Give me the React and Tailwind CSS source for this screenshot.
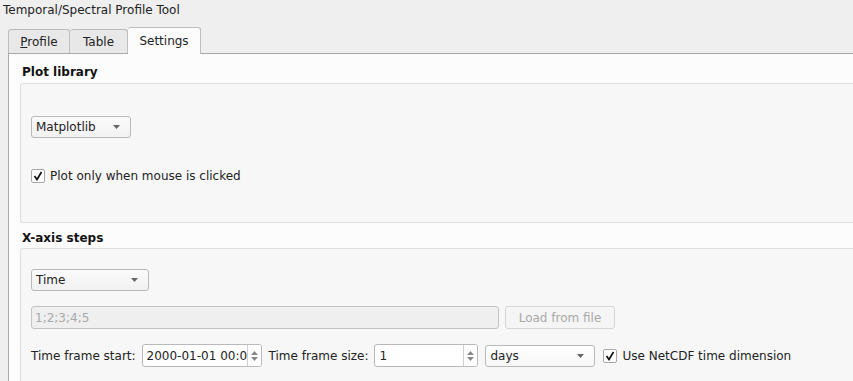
const font = { fontFamily: '"DejaVu Sans", sans-serif' }

function Arrow() {
  return (
    <svg width="7" height="4" viewBox="0 0 7 4" className="shrink-0">
      <path d="M0 0 L7 0 L3.5 4 Z" fill="#666" />
    </svg>
  )
}

function Combo({ label, className }) {
  return (
    <div className={`flex items-center justify-between h-[22px] pl-[4px] pr-[10px] rounded-[3px] border border-[#b9b9b9] bg-gradient-to-b from-[#fbfbfb] to-[#f1f1f1] text-[#222] ${className}`}>
      <span>{label}</span>
      <Arrow />
    </div>
  )
}

function Check({ label }) {
  return (
    <div className="flex items-center gap-[5px]">
      <div className="w-[14px] h-[14px] border border-[#a8a8a8] rounded-[2px] bg-white flex items-center justify-center">
        <svg width="10" height="10" viewBox="0 0 10 10">
          <path d="M1.5 5 L4 8.5 L8.5 1" fill="none" stroke="#111" strokeWidth="1.7" />
        </svg>
      </div>
      <span className="text-[#222]">{label}</span>
    </div>
  )
}

function Spin({ value, className }) {
  return (
    <div className={`flex items-center h-[23px] rounded-[3px] border border-[#b9b9b9] bg-white overflow-hidden ${className}`}>
      <span className="flex-1 pl-[4px] whitespace-nowrap overflow-hidden text-[#222]">{value}</span>
      <div className="w-[14px] h-full border-l border-[#cfcfcf] flex flex-col items-center justify-center gap-[2px] bg-white">
        <svg width="7" height="4" viewBox="0 0 7 4"><path d="M0 4 L3.5 0 L7 4 Z" fill="#888" /></svg>
        <svg width="7" height="4" viewBox="0 0 7 4"><path d="M0 0 L3.5 4 L7 0 Z" fill="#888" /></svg>
      </div>
    </div>
  )
}

export default function App() {
  return (
    <div className="w-[853px] h-[381px] overflow-hidden bg-[#efefef] text-[12px]" style={font}>
      {/* Title */}
      <div className="h-[20px] pl-[3px] pt-[1px] text-[#222]">Temporal/Spectral Profile Tool</div>

      {/* Tabs */}
      <div className="flex items-end h-[33px] pl-[8px]">
        <div className="h-[24px] w-[62px] border border-[#bdbdbd] border-b-0 rounded-t-[3px] bg-[#e8e8e8] flex items-center justify-center text-[#222]">
          <span><span className="underline">P</span>rofile</span>
        </div>
        <div className="h-[24px] w-[58px] border border-[#bdbdbd] border-l-0 border-b-0 rounded-t-[3px] bg-[#e8e8e8] flex items-center justify-center text-[#222]">
          Table
        </div>
        <div className="h-[27px] w-[73px] -mb-px relative z-10 border border-[#bdbdbd] border-l-0 border-b-0 rounded-t-[3px] bg-[#fcfcfc] flex items-center justify-center text-[#222]">
          Settings
        </div>
      </div>

      {/* Pane */}
      <div className="ml-[8px] h-[340px] border-t border-l border-[#a8a8a8] bg-[#fcfcfc] pl-[11px] pt-[9px]">
        <div className="font-bold text-[#111] pl-[2px] h-[20px]">Plot library</div>
        <div className="h-[140px] border border-[#dedede] border-r-0 rounded-l-[3px] bg-[#f7f7f7] pl-[10px] pt-[32px]">
          <Combo label="Matplotlib" className="w-[100px]" />
          <div className="mt-[29px]">
            <Check label="Plot only when mouse is clicked" />
          </div>
        </div>

        <div className="font-bold text-[#111] pl-[2px] h-[25px] pt-[6px]">X-axis steps</div>
        <div className="h-[140px] border border-[#dedede] border-r-0 rounded-l-[3px] bg-[#f7f7f7] pl-[10px] pt-[20px]">
          <Combo label="Time" className="w-[118px]" />
          <div className="flex items-center gap-[6px] mt-[15px]">
            <div className="w-[468px] h-[23px] rounded-[3px] border border-[#c4c4c4] bg-[#efefef] pl-[3px] flex items-center text-[#a9a9a9]">
              1;2;3;4;5
            </div>
            <div className="w-[110px] h-[23px] rounded-[3px] border border-[#d6d6d6] bg-[#f5f5f5] flex items-center justify-center text-[#a9a9a9]">
              Load from file
            </div>
          </div>
          <div className="flex items-center mt-[15px]">
            <span className="text-[#222] whitespace-nowrap">Time frame start:</span>
            <Spin value="2000-01-01 00:00" className="w-[120px] ml-[6px]" />
            <span className="text-[#222] whitespace-nowrap ml-[7px]">Time frame size:</span>
            <Spin value="1" className="w-[104px] ml-[6px]" />
            <Combo label="days" className="w-[110px] ml-[7px] from-[#ffffff] to-[#f7f7f7]" />
            <div className="ml-[8px]">
              <Check label="Use NetCDF time dimension" />
            </div>
          </div>
        </div>
      </div>
    </div>
  )
}
